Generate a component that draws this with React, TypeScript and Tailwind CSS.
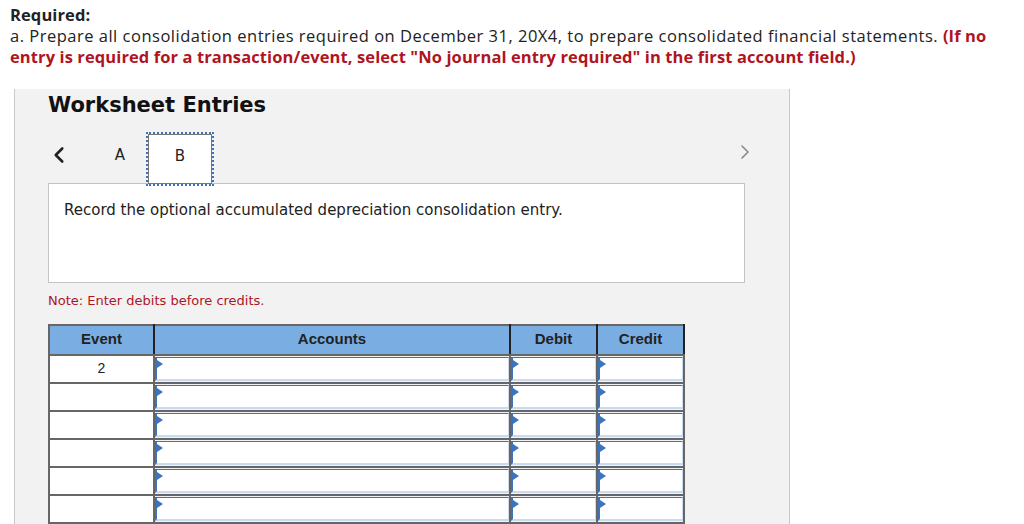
import { ChevronLeft, ChevronRight } from "lucide-react";

const rows = ["2", "", "", "", "", ""];

function InputCell() {
  return (
    <td className="p-0 border-2 border-[#666]">
      <div className="relative h-[24px] border-l-2 border-t border-r border-b-2 border-l-[#3f72b5] border-t-[#3f72b5] border-r-[#c9dbf2] border-b-[#c9dbf2] bg-white">
        {/* small marker in corner */}
        <svg className="absolute left-0 top-[2px]" width="6" height="8" viewBox="0 0 6 8">
          <path d="M0 0 L6 4 L0 8 Z" fill="#3a74c2" />
        </svg>
      </div>
    </td>
  );
}

export default function App() {
  return (
    <div className="w-[1024px] h-[524px] overflow-hidden bg-white font-['Liberation_Sans',sans-serif]">
      {/* instructions */}
      <div className="px-[10px] pt-[4px] text-[16.5px] leading-[21px] text-[#222] font-['Open_Sans',sans-serif]">
        <div className="font-bold tracking-[0.1px]">Required:</div>
        <div className="whitespace-nowrap tracking-[0.5px]">
          a. Prepare all consolidation entries required on December 31, 20X4, to prepare consolidated financial statements.{" "}
          <span className="font-bold text-[#b0151f] tracking-[0.1px]">(If no</span>
        </div>
        <div className="font-bold text-[#b0151f] whitespace-nowrap tracking-[0.1px]">
          entry is required for a transaction/event, select "No journal entry required" in the first account field.)
        </div>
      </div>

      {/* worksheet panel */}
      <div className="ml-[14px] mt-[22px] w-[776px] h-[460px] bg-[#f2f2f2] border-x border-[#c8c8c8] pl-[33px] pt-[2px]">
        <h2 className="font-['DejaVu_Sans',sans-serif] font-bold text-[21px] leading-[28px] text-[#111]">
          Worksheet Entries
        </h2>

        <div className="flex items-end mt-[15px] w-[712px] relative">
          <button className="w-[44px] h-[30px] flex items-center mb-[13px]">
            <ChevronLeft className="w-[26px] h-[26px] text-[#222] -ml-[2px]" strokeWidth={2.4} />
          </button>
          <div className="w-[56px] text-center text-[15px] mb-[17px] font-['DejaVu_Sans',sans-serif] text-[#222]">A</div>
          <div className="w-[64px] h-[50px] bg-white border border-[#777] outline-2 outline-dotted outline-[#3f72b5] flex justify-center pt-[10px] text-[15px] font-['DejaVu_Sans',sans-serif] text-[#222] -mb-px relative z-10">
            B
          </div>
          <ChevronRight className="absolute right-[3px] top-[6px] w-[24px] h-[24px] text-[#888]" strokeWidth={1.6} />
        </div>

        <div className="w-[697px] h-[100px] bg-white border border-[#c4c4c4] px-[15px] pt-[15px] font-['DejaVu_Sans',sans-serif] text-[15px] text-[#222]">
          Record the optional accumulated depreciation consolidation entry.
        </div>

        <div className="mt-[8px] font-['DejaVu_Sans',sans-serif] text-[13px] text-[#b0151f]">
          Note: Enter debits before credits.
        </div>

        <table className="mt-[13px] table-fixed border-collapse w-[635px] text-[15px]">
          <colgroup>
            <col className="w-[105px]" />
            <col className="w-[356px]" />
            <col className="w-[87px]" />
            <col className="w-[87px]" />
          </colgroup>
          <thead>
            <tr className="h-[30px] bg-[#7aaee3] text-[#222] font-bold">
              <th className="border-2 border-[#666] border-r-[#222]">Event</th>
              <th className="border-2 border-[#666] border-r-[#222]">Accounts</th>
              <th className="border-2 border-[#666] border-r-[#222]">Debit</th>
              <th className="border-2 border-[#666] border-r-[#222]">Credit</th>
            </tr>
          </thead>
          <tbody>
            {rows.map((ev, i) => (
              <tr key={i}>
                <td className="h-[28px] bg-white border-2 border-[#666] text-center text-[14px] text-[#222] align-middle">
                  {ev}
                </td>
                <InputCell />
                <InputCell />
                <InputCell />
              </tr>
            ))}
          </tbody>
        </table>
      </div>
    </div>
  );
}
